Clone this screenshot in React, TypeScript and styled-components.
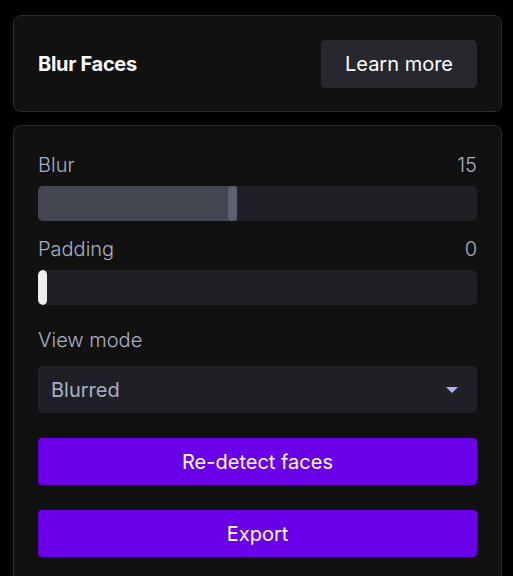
import React from "react";
import styled, { createGlobalStyle } from "styled-components";

const Global = createGlobalStyle`
  html, body { margin: 0; padding: 0; background: #000; }
  body { font-family: Inter, "Noto Sans", sans-serif; }
  * { box-sizing: border-box; }
`;

const Page = styled.div`
  padding: 15px 11px 0 13px;
  display: flex;
  flex-direction: column;
  gap: 13px;
  width: 513px;
  height: 576px;
  overflow: hidden;
`;

const Card = styled.div`
  background: #111111;
  border: 1px solid #2a2a30;
  border-radius: 8px;
  width: 489px;
  flex-shrink: 0;
`;

const Header = styled(Card)`
  height: 97px;
  display: flex;
  align-items: center;
  justify-content: space-between;
  padding: 0 24px;
`;

const Title = styled.div`
  color: #ffffff;
  font-weight: 700;
  font-size: 20px;
  letter-spacing: -0.3px;
`;

const GhostButton = styled.button`
  background: #26282d;
  border: none;
  border-radius: 5px;
  color: #ffffff;
  font-family: inherit;
  font-size: 20px;
  width: 156px;
  height: 48px;
  padding: 0;
`;

const Body = styled(Card)`
  flex: 1 0 auto;
  padding: 25px 24px 24px 24px;
  display: flex;
  flex-direction: column;
  border-bottom: none;
  border-bottom-left-radius: 0;
  border-bottom-right-radius: 0;
`;

const LabelRow = styled.div`
  display: flex;
  justify-content: space-between;
  color: #a6b0c4;
  font-size: 20px;
  font-weight: 300;
  line-height: 28px;
  height: 24px;
`;

const Track = styled.div<{ $mb: number }>`
  margin-top: 11px;
  margin-bottom: ${(p) => p.$mb}px;
  height: 35px;
  background: #1f2026;
  border-radius: 5px;
  position: relative;
  overflow: hidden;
`;

const Fill = styled.div`
  position: absolute;
  left: 0;
  top: 0;
  bottom: 0;
  background: #434651;
`;

const Thumb = styled.div<{ $light?: boolean }>`
  position: absolute;
  top: 0;
  bottom: 0;
  width: 9px;
  border-radius: 5px;
  background: ${(p) => (p.$light ? "#eeeeee" : "#5d6070")};
`;

const Select = styled.div`
  margin-top: 16px;
  height: 47px;
  background: #1f2026;
  border-radius: 4px;
  display: flex;
  align-items: center;
  justify-content: space-between;
  padding: 0 19px 0 13px;
  color: #a6b0c4;
  font-size: 20px;
`;

const Caret = styled.span`
  width: 0;
  height: 0;
  border-left: 6px solid transparent;
  border-right: 6px solid transparent;
  border-top: 6px solid #a5b4fc;
`;

const Primary = styled.button<{ $mt: number }>`
  margin-top: ${(p) => p.$mt}px;
  height: 47px;
  width: 100%;
  background: #6a00e8;
  border: none;
  border-radius: 4px;
  color: #ffffff;
  font-family: inherit;
  font-size: 20px;
  padding: 0;
`;

const Slider = ({
  label,
  value,
  pct,
  light,
  mb,
}: {
  label: string;
  value: string;
  pct: number;
  light?: boolean;
  mb: number;
}) => (
  <>
    <LabelRow>
      <span>{label}</span>
      <span>{value}</span>
    </LabelRow>
    <Track $mb={mb}>
      {pct > 0 && <Fill style={{ width: `${pct}px` }} />}
      <Thumb $light={light} style={{ left: `${Math.max(pct - 9, 0)}px` }} />
    </Track>
  </>
);

export default function App() {
  return (
    <>
      <Global />
      <Page>
        <Header>
          <Title>Blur Faces</Title>
          <GhostButton>Learn more</GhostButton>
        </Header>
        <Body>
          <Slider label="Blur" value="15" pct={199} mb={14} />
          <Slider label="Padding" value="0" pct={0} light mb={21} />
          <LabelRow>
            <span>View mode</span>
          </LabelRow>
          <Select>
            <span>Blurred</span>
            <Caret />
          </Select>
          <Primary $mt={25}>Re-detect faces</Primary>
          <Primary $mt={25}>Export</Primary>
        </Body>
      </Page>
    </>
  );
}
